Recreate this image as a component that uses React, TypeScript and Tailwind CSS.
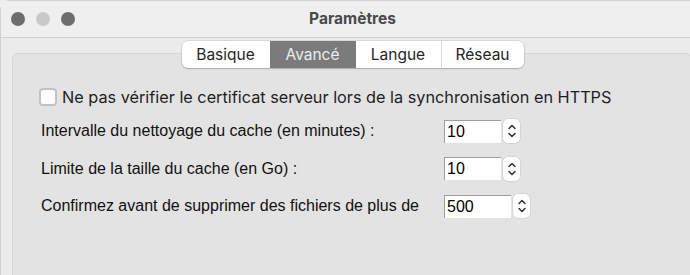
import { useState } from 'react'

const tabs = [
  { label: 'Basique', w: 'w-[88px]' },
  { label: 'Avancé', w: 'w-[86px]' },
  { label: 'Langue', w: 'w-[85px]' },
  { label: 'Réseau', w: 'w-[83px]' },
]

const rows = [
  { label: 'Intervalle du nettoyage du cache (en minutes) :', value: '10', wide: false },
  { label: 'Limite de la taille du cache (en Go) :', value: '10', wide: false },
  { label: 'Confirmez avant de supprimer des fichiers de plus de', value: '500', wide: true },
]

const Stepper = () => (
  <div className="ml-[2px] flex h-[24px] w-[17px] flex-col items-center justify-center rounded-[5px] bg-white shadow-[0_0_0_0.5px_rgba(0,0,0,0.12)]">
    <svg width="10" height="20" viewBox="0 0 10 20" fill="none" stroke="#333" strokeWidth="1.5" strokeLinecap="round" strokeLinejoin="round">
      <path d="M2 7.5 L5 4.5 L8 7.5" />
      <path d="M2 12.5 L5 15.5 L8 12.5" />
    </svg>
  </div>
)

export default function App() {
  const [active, setActive] = useState(1)
  const [checked, setChecked] = useState(false)

  return (
    <div className="h-[275px] w-[690px] overflow-hidden bg-[#ececec]" style={{ fontFamily: '"Liberation Sans", Arial, sans-serif' }}>
      <div className="h-[275px] w-[704px] rounded-tl-[10px] border-l border-t border-[#d2d2d2] bg-[#ebebeb]">
        {/* title bar */}
        <div className="relative flex h-[37px] items-center border-b border-[#d0d0d0] bg-[#efefef] pl-[10px]">
          <div className="flex gap-[11px]">
            <span className="h-[14px] w-[14px] rounded-full bg-[#6d6d6d]" />
            <span className="h-[14px] w-[14px] rounded-full bg-[#c9c9c9]" />
            <span className="h-[14px] w-[14px] rounded-full bg-[#6d6d6d]" />
          </div>
          <div className="absolute inset-0 flex items-center justify-center pb-[1px] font-['Inter',sans-serif] text-[15.5px] font-bold text-[#4a4a4a]">
            Paramètres
          </div>
        </div>

        {/* tabs */}
        <div className="relative z-10 mt-[3px] flex justify-center">
          <div className="flex h-[27px] overflow-hidden rounded-[6px] bg-white font-['Inter',sans-serif] text-[15.5px] text-[#262626] shadow-[0_0_0_0.5px_rgba(0,0,0,0.15),0_1px_1.5px_rgba(0,0,0,0.18)]">
            {tabs.map((t, i) => (
              <button
                key={t.label}
                onClick={() => setActive(i)}
                className={`${t.w} flex items-center justify-center ${i > 0 && i !== active && i - 1 !== active ? 'border-l border-[#dcdcdc]' : ''} ${i === active ? 'bg-[#7b7b7b] text-[#ececec]' : ''}`}
              >
                {t.label}
              </button>
            ))}
          </div>
        </div>

        {/* group box */}
        <div className="-mt-[15px] ml-[11px] mr-[12px] h-[240px] rounded-[6px] border border-[#d6d6d6] bg-[#e3e3e3] pl-[26px] pt-[34px]">
          <label className="flex h-[18px] items-center gap-[5px] font-['Inter',sans-serif] text-[16.25px] leading-[18px] text-[#1e1e1e]">
            <span
              onClick={() => setChecked(!checked)}
              className="flex h-[18px] w-[18px] items-center justify-center rounded-[4px] border-2 border-[#c2c2c2] bg-white"
            >
              {checked && <span className="text-[12px] leading-none">✓</span>}
            </span>
            Ne pas vérifier le certificat serveur lors de la synchronisation en HTTPS
          </label>

          <div className="mt-[13px] flex flex-col gap-[13.5px] pl-[2px]">
            {rows.map((r) => (
              <div key={r.label} className="flex h-[24px] items-center">
                <div className="w-[403px] text-[16px] text-[#111]">{r.label}</div>
                <div className={`${r.wide ? 'w-[67px]' : 'w-[57px]'} flex h-[23px] items-center border-l border-t border-[#9e9e9e] bg-white pl-[2px] text-[16px] text-black`}>
                  {r.value}
                </div>
                <Stepper />
              </div>
            ))}
          </div>
        </div>
      </div>
    </div>
  )
}
